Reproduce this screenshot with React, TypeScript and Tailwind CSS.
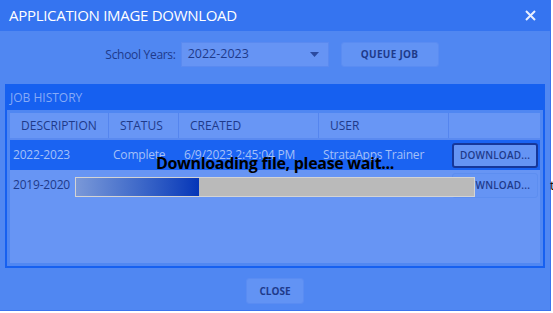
import React from 'react';

type Job = {
  description: string;
  status: string;
  created: string;
  user: string;
};

const jobs: Job[] = [
  { description: '2022-2023', status: 'Complete', created: '6/9/2023 2:45:04 PM', user: 'StrataApps Trainer' },
  { description: '2019-2020', status: '', created: '', user: '' },
];

const font = { fontFamily: '"Open Sans", "Liberation Sans", sans-serif' };

function ChevronDown() {
  return (
    <svg width="9" height="6" viewBox="0 0 9 6">
      <path d="M0 0 L9 0 L4.5 5 Z" fill="#2a4aa0" />
    </svg>
  );
}

export default function App() {
  const progress = 31; // percent of the bar filled

  return (
    <div className="w-[553px] h-[313px] bg-white flex relative overflow-hidden" style={font}>
      <div className="w-[551px] h-[311px] bg-[#5087f2] border-r border-b border-[#3a74ee] flex flex-col relative">
        {/* title bar */}
        <div className="h-[31px] bg-[#3574f0] flex items-center justify-between pl-[9px] pr-[14px] shrink-0">
          <span className="text-white text-[15px] tracking-[-0.3px]">APPLICATION IMAGE DOWNLOAD</span>
          <svg width="11" height="11" viewBox="0 0 11 11">
            <path d="M1 1 L10 10 M10 1 L1 10" stroke="#e8efff" strokeWidth="2" />
          </svg>
        </div>

        {/* toolbar */}
        <div className="flex items-center justify-center mt-[11px] h-[25px] pr-[6px]">
          <span className="text-[12px] text-[#1e3a8a] mr-[5px] tracking-[-0.3px]">School Years:</span>
          <div className="w-[148px] h-[25px] bg-[#6694f4] border border-[#5a8af0] flex items-center justify-between pl-[6px] pr-[9px]">
            <span className="text-[12.5px] text-[#1e3a8a]">2022-2023</span>
            <ChevronDown />
          </div>
          <button className="ml-[12px] w-[98px] h-[25px] bg-[#6293f4] border border-[#5a8cf2] rounded-[3px] text-[10px] font-bold text-[#1e3a8a] tracking-[0.3px]">
            QUEUE JOB
          </button>
        </div>

        {/* job history panel */}
        <div className="mx-[5px] mt-[17px] h-[184px] border-2 border-[#1660f0] flex flex-col">
          <div className="h-[24px] bg-[#1660f0] flex items-center pl-[3px] shrink-0">
            <span className="text-[12px] text-[#86aaf7]">JOB HISTORY</span>
          </div>
          <div className="flex-1 p-[3px] pb-[3px]">
            <div className="h-full bg-[#6795f4] flex flex-col relative">
              <div className="h-[25px] flex bg-[#6896f5] text-[12px] text-[#1e3a8a]">
                <div className="w-[99px] border-r border-[#5585ee] flex items-center pl-[11px]">DESCRIPTION</div>
                <div className="w-[70px] border-r border-[#5585ee] flex items-center pl-[11px]">STATUS</div>
                <div className="w-[140px] border-r border-[#5585ee] flex items-center pl-[11px]">CREATED</div>
                <div className="w-[130px] border-r border-[#5585ee] flex items-center pl-[11px]">USER</div>
                <div className="flex-1" />
              </div>
              <div className="h-[2px] bg-[#5a8af0]" />
              {jobs.map((job, i) => {
                const selected = i === 0;
                return (
                  <div
                    key={job.description}
                    className={
                      selected
                        ? 'h-[30px] flex items-center bg-[#1a63f2] text-[12px] text-[#a4c0f8] tracking-[-0.2px]'
                        : 'h-[30px] flex items-center text-[12px] text-[#1e3a8a] tracking-[-0.2px]'
                    }
                  >
                    <div className="w-[99px] pl-[3px]">{job.description}</div>
                    <div className="w-[70px] pl-[4px]">{job.status}</div>
                    <div className="w-[140px] pl-[5px]">{job.created}</div>
                    <div className="w-[130px] pl-[4px]">{job.user}</div>
                    <div className="flex-1 flex justify-center pl-[1px]">
                      <button
                        className={
                          selected
                            ? 'w-[86px] h-[25px] rounded-[3px] border-2 border-[#16379a] bg-[#6594f4] text-[10px] font-semibold text-[#1e3a8a] tracking-[0.2px]'
                            : 'w-[86px] h-[25px] rounded-[3px] border border-[#5d8ef0] bg-[#6594f4] text-[10px] font-semibold text-[#1e3a8a] tracking-[0.2px]'
                        }
                      >
                        DOWNLOAD...
                      </button>
                    </div>
                  </div>
                );
              })}
            </div>
          </div>
        </div>

        {/* footer */}
        <div className="flex-1 flex items-start justify-center pt-[10px]">
          <button className="w-[58px] h-[26px] bg-[#6293f4] border border-[#5a8cf2] rounded-[3px] text-[10px] font-bold text-[#1e3a8a]">
            CLOSE
          </button>
        </div>

        {/* download overlay */}
        <div className="absolute left-[75px] top-[153px] w-[400px] flex flex-col items-center">
          <span className="text-[16px] font-bold text-black leading-[20px] tracking-[-0.3px]">
            Downloading file, please wait...
          </span>
          <div className="mt-[4px] w-[400px] h-[20px] border border-[#d4d4d4] bg-[#bababa] flex">
            <div
              className="h-full bg-gradient-to-r from-[#7a98d8] to-[#0535b8]"
              style={{ width: `${progress}%` }}
            />
          </div>
        </div>
      </div>
      <span className="absolute left-[550px] top-[176px] text-[13px] text-black">t</span>
    </div>
  );
}
